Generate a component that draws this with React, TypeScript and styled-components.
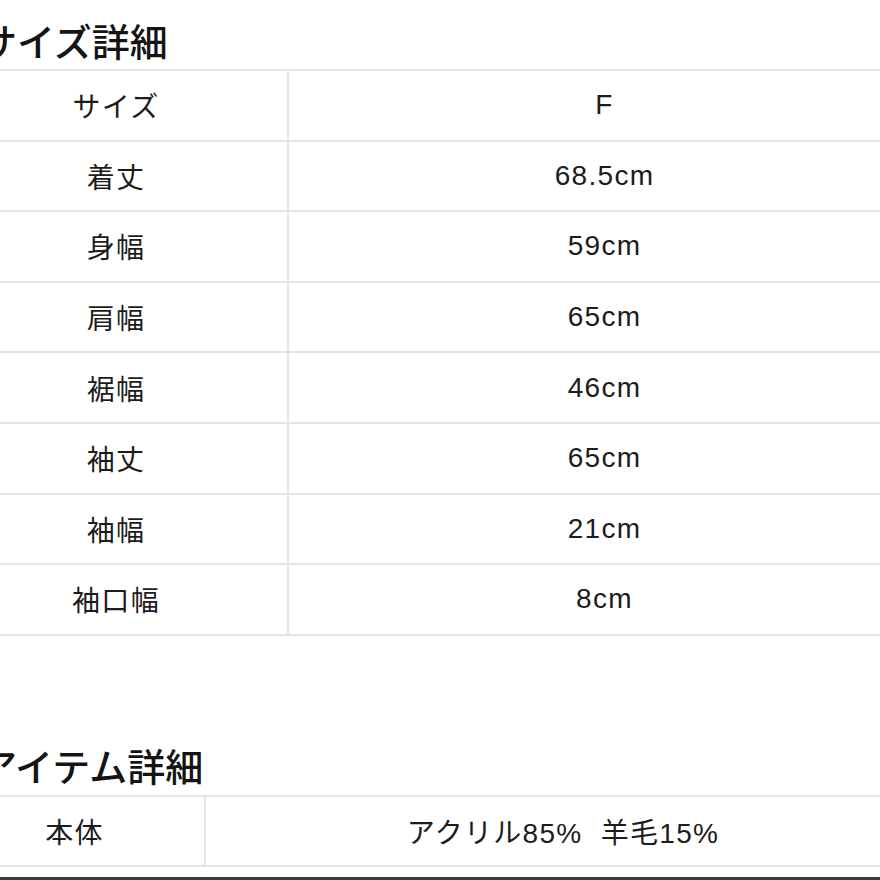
import React from "react";
import styled, { createGlobalStyle } from "styled-components";

const GlobalStyle = createGlobalStyle`
  html, body {
    margin: 0;
    padding: 0;
    background: #ffffff;
  }
  body {
    font-family: "Liberation Sans", "Noto Sans CJK JP", sans-serif;
    color: #1c1c1c;
  }
`;

const Page = styled.div`
  width: 880px;
  height: 880px;
  overflow: hidden;
  display: flex;
  flex-direction: column;
`;

const Section = styled.section<{ $top: number }>`
  display: flex;
  flex-direction: column;
  margin-top: ${(p) => p.$top}px;
`;

const Title = styled.h2<{ $gap: number }>`
  margin: 0 0 ${(p) => p.$gap}px -21px;
  height: 36px;
  font-family: "Noto Sans CJK JP", sans-serif;
  font-size: 38px;
  line-height: 36px;
  font-weight: 500;
  color: #141414;
  white-space: nowrap;
`;

const Table = styled.div<{ $labelWidth: number }>`
  display: grid;
  grid-template-columns: ${(p) => p.$labelWidth}px 1fr;
  margin-left: -55px;
  width: 975px;
  border-bottom: 2px solid #e4e4e4;
`;

const Cell = styled.div<{ $label?: boolean }>`
  box-sizing: border-box;
  height: 70.6px;
  display: flex;
  align-items: center;
  justify-content: center;
  border-top: 2px solid #e4e4e4;
  border-right: ${(p) => (p.$label ? "2px solid #e4e4e4" : "none")};
  font-size: 28px;
  letter-spacing: 1.3px;
  color: #1c1c1c;
  white-space: pre;
`;

const BottomEdge = styled.div`
  margin-top: auto;
  height: 3px;
  background: #3c3c3c;
`;

const sizeRows: [string, string][] = [
  ["サイズ", "F"],
  ["着丈", "68.5cm"],
  ["身幅", "59cm"],
  ["肩幅", "65cm"],
  ["裾幅", "46cm"],
  ["袖丈", "65cm"],
  ["袖幅", "21cm"],
  ["袖口幅", "8cm"],
];

const itemRows: [string, string][] = [["本体", "アクリル85%  羊毛15%"]];

const DetailTable = ({ rows, labelWidth }: { rows: [string, string][]; labelWidth: number }) => (
  <Table $labelWidth={labelWidth}>
    {rows.map(([label, value]) => (
      <React.Fragment key={label}>
        <Cell $label>{label}</Cell>
        <Cell>{value}</Cell>
      </React.Fragment>
    ))}
  </Table>
);

export default function App() {
  return (
    <Page>
      <GlobalStyle />
      <Section $top={22}>
        <Title $gap={11}>サイズ詳細</Title>
        <DetailTable rows={sizeRows} labelWidth={344} />
      </Section>
      <Section $top={111}>
        <Title $gap={12}>アイテム詳細</Title>
        <DetailTable rows={itemRows} labelWidth={261} />
      </Section>
      <BottomEdge />
    </Page>
  );
}
